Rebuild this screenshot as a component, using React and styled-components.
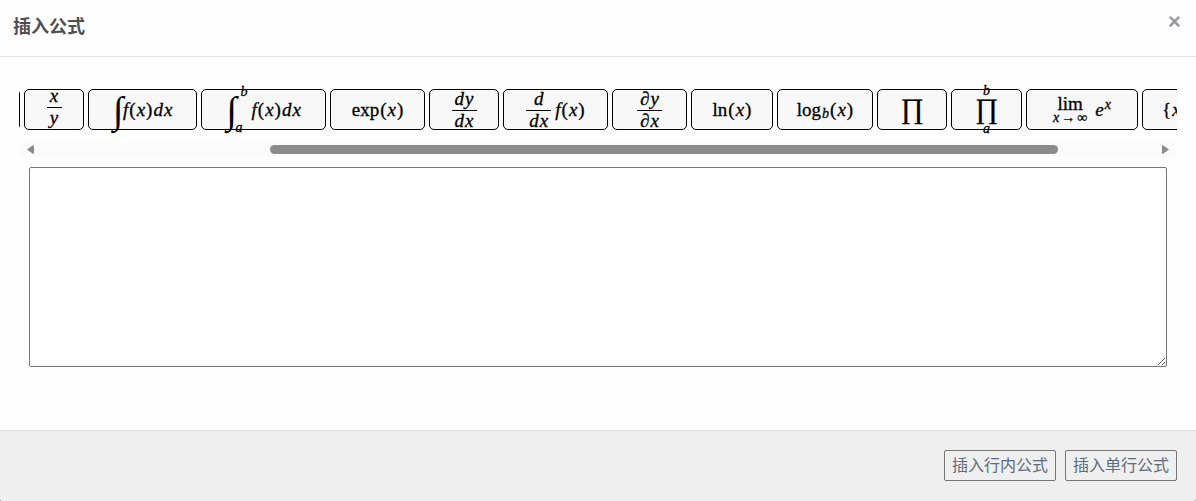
import React, { useLayoutEffect, useRef } from "react";
import styled, { createGlobalStyle } from "styled-components";

const GlobalStyle = createGlobalStyle`
  * { box-sizing: border-box; }
  body {
    margin: 0;
    background: #333;
    font-family: "Noto Sans CJK SC", sans-serif;
  }
`;

const Dialog = styled.section`
  display: flex;
  flex-direction: column;
  min-height: 100vh;
  background: #fefefe;
  border-radius: 0 0 2px 2px;
  overflow: hidden;
`;

const Header = styled.header`
  display: flex;
  justify-content: space-between;
  align-items: flex-start;
  height: 57px;
  padding: 12px 13px;
  border-bottom: 1px solid #e2e2e2;
`;

const Title = styled.h1`
  margin: 0;
  font-size: 18px;
  line-height: 26px;
  font-weight: 700;
  color: #505050;
`;

const CloseButton = styled.button`
  padding: 0;
  width: 17px;
  border: 0;
  background: none;
  color: #999;
  font: 700 22px/20px "Liberation Sans", sans-serif;
`;

const Body = styled.main`
  flex: 1;
  padding: 24px 19px;
`;

const Palette = styled.div`
  display: flex;
  gap: 4px;
  padding: 8px 0 12px;
  overflow: hidden;
`;

const FormulaButton = styled.button`
  flex: none;
  display: flex;
  justify-content: center;
  align-items: center;
  width: ${(p) => p.$width}px;
  height: 41px;
  padding: 0;
  border: 1px solid #000;
  border-radius: 5px;
  background: #f8f8f8;
  color: #000;
  font: 19px/20px "Liberation Serif", serif;
  -webkit-text-stroke: 0.3px;
`;

const Row = styled.span`
  display: flex;
  align-items: center;
  gap: ${(p) => p.$gap ?? 0}px;
`;

const Run = styled.span`
  display: flex;
  gap: 1px;
  line-height: 20px;
`;

const Var = styled.i`
  font-style: italic;
`;

const Fraction = styled.span`
  display: flex;
  flex-direction: column;
  align-items: center;
  line-height: 20px;
  padding-bottom: ${(p) => (p.$raised ? 6 : 0)}px;
`;

const Numerator = styled.span`
  display: flex;
  gap: 1px;
  padding: 0 3px;
  height: 22px;
  border-bottom: 1px solid #000;
  min-width: ${(p) => (p.$wide ? 25 : 15)}px;
  justify-content: center;
`;

const Denominator = styled(Numerator)`
  height: 20px;
  border: 0;
`;

const Integral = styled.span`
  font-size: 38px;
  font-style: italic;
  line-height: 40px;
  -webkit-text-stroke: 0;
`;

const Limits = styled.span`
  display: flex;
  flex-direction: column;
  justify-content: space-between;
  height: 50px;
  margin-left: -6px;
  font-size: 14px;
  line-height: 14px;
`;

const UpperLimit = styled(Var)`
  padding-left: 10px;
`;

const Product = styled.span`
  font-size: 28px;
  line-height: ${(p) => (p.$tight ? 24 : 28)}px;
  padding-bottom: 2px;
`;

const Stack = styled.span`
  display: flex;
  flex-direction: column;
  align-items: center;
  font-size: 14px;
  line-height: 12px;
`;

const LimitName = styled.span`
  font-size: 19px;
  line-height: 16px;
`;

const Sub = styled.sub`
  align-self: flex-end;
  font-size: 14px;
  line-height: 12px;
  vertical-align: baseline;
`;

const Sup = styled.sup`
  font-size: 14px;
  line-height: 10px;
  vertical-align: baseline;
`;

const Scrollbar = styled.div`
  display: flex;
  align-items: center;
  height: 15px;
  padding: 0 8px;
  background: #fbfbfb;
`;

const ScrollTrack = styled.div`
  flex: 1;
  display: grid;
  grid-template-columns: 236fr 788fr 104fr;
`;

const ScrollThumb = styled.div`
  grid-column: 2;
  height: 9px;
  border-radius: 5px;
  background: #8b8b8b;
`;

const ScrollArrow = styled.svg`
  display: block;
  width: 7px;
  height: 9px;
  fill: #8b8b8b;
`;

const Editor = styled.textarea`
  display: block;
  width: calc(100% - 20px);
  height: 200px;
  margin: 10px 10px 0;
  border: 1px solid #767676;
  border-radius: 2px;
  background: #fff;
  resize: both;
`;

const Footer = styled.footer`
  display: flex;
  justify-content: flex-end;
  gap: 9px;
  height: 71px;
  padding: 19px;
  border-top: 1px solid #e0e0e0;
  background: #efefef;
`;

const InsertButton = styled.button`
  height: 31px;
  padding: 0 7px 4px;
  border: 1px solid #767676;
  border-radius: 2px;
  background: #efefef;
  color: #606b7b;
  font: 16px/24px "Noto Sans CJK SC", sans-serif;
`;

const OfX = () => (
  <>
    <span>(</span>
    <Var>x</Var>
    <span>)</span>
  </>
);

const Fx = ({ dx }) => (
  <Run>
    <Var>f</Var>
    <OfX />
    {dx && (
      <>
        <Var>d</Var>
        <Var>x</Var>
      </>
    )}
  </Run>
);

const Frac = ({ top, bottom, raised }) => (
  <Fraction $raised={raised}>
    <Numerator $wide={bottom.length > 1}>
      {[...top].map((c) => (
        <Var key={c}>{c}</Var>
      ))}
    </Numerator>
    <Denominator>
      {[...bottom].map((c) => (
        <Var key={c}>{c}</Var>
      ))}
    </Denominator>
  </Fraction>
);

const formulas = [
  { name: "previous", width: 60, body: null },
  { name: "fraction", width: 60, body: <Frac top="x" bottom="y" raised /> },
  {
    name: "integral",
    width: 109,
    body: (
      <Row>
        <Integral>∫</Integral>
        <Fx dx />
      </Row>
    ),
  },
  {
    name: "definite integral",
    width: 125,
    body: (
      <Row $gap={4}>
        <Row>
          <Integral>∫</Integral>
          <Limits>
            <UpperLimit>b</UpperLimit>
            <Var>a</Var>
          </Limits>
        </Row>
        <Fx dx />
      </Row>
    ),
  },
  { name: "exponential", width: 95, body: <Run>exp<OfX /></Run> },
  { name: "derivative", width: 70, body: <Frac top="dy" bottom="dx" /> },
  {
    name: "derivative of f",
    width: 105,
    body: (
      <Row $gap={4}>
        <Frac top="d" bottom="dx" />
        <Fx />
      </Row>
    ),
  },
  { name: "partial derivative", width: 75, body: <Frac top="∂y" bottom="∂x" /> },
  { name: "natural logarithm", width: 82, body: <Run>ln<OfX /></Run> },
  {
    name: "logarithm",
    width: 96,
    body: (
      <Run>
        log
        <Sub><Var>b</Var></Sub>
        <OfX />
      </Run>
    ),
  },
  { name: "product", width: 70, body: <Product>∏</Product> },
  {
    name: "product with limits",
    width: 71,
    body: (
      <Stack>
        <Var>b</Var>
        <Product $tight>∏</Product>
        <Var>a</Var>
      </Stack>
    ),
  },
  {
    name: "limit",
    width: 112,
    body: (
      <Row $gap={8}>
        <Stack>
          <LimitName>lim</LimitName>
          <Row $gap={2}>
            <Var>x</Var>
            <span>→</span>
            <span>∞</span>
          </Row>
        </Stack>
        <Run>
          <Var>e</Var>
          <Sup><Var>x</Var></Sup>
        </Run>
      </Row>
    ),
  },
  { name: "set", width: 84, body: <Run>{"{"}<Var>x</Var>, <Var>y</Var>{"}"}</Run> },
];

export default function App() {
  const palette = useRef(null);

  // Start past the first button so the palette opens mid-list.
  useLayoutEffect(() => {
    palette.current.scrollLeft = 59;
  }, []);

  return (
    <>
      <GlobalStyle />
      <Dialog>
        <Header>
          <Title>插入公式</Title>
          <CloseButton type="button" aria-label="关闭">×</CloseButton>
        </Header>
        <Body>
          <Palette ref={palette}>
            {formulas.map((f) => (
              <FormulaButton key={f.name} type="button" aria-label={f.name} $width={f.width}>
                {f.body}
              </FormulaButton>
            ))}
          </Palette>
          <Scrollbar>
            <ScrollArrow viewBox="0 0 7 9"><path d="M0 4.5 5.5.4Q7-.3 7 1V8Q7 9.3 5.5 8.6Z" /></ScrollArrow>
            <ScrollTrack>
              <ScrollThumb />
            </ScrollTrack>
            <ScrollArrow viewBox="0 0 7 9"><path d="M7 4.5 1.5.4Q0-.3 0 1V8Q0 9.3 1.5 8.6Z" /></ScrollArrow>
          </Scrollbar>
          <Editor aria-label="公式" />
        </Body>
        <Footer>
          <InsertButton type="button">插入行内公式</InsertButton>
          <InsertButton type="button">插入单行公式</InsertButton>
        </Footer>
      </Dialog>
    </>
  );
}
